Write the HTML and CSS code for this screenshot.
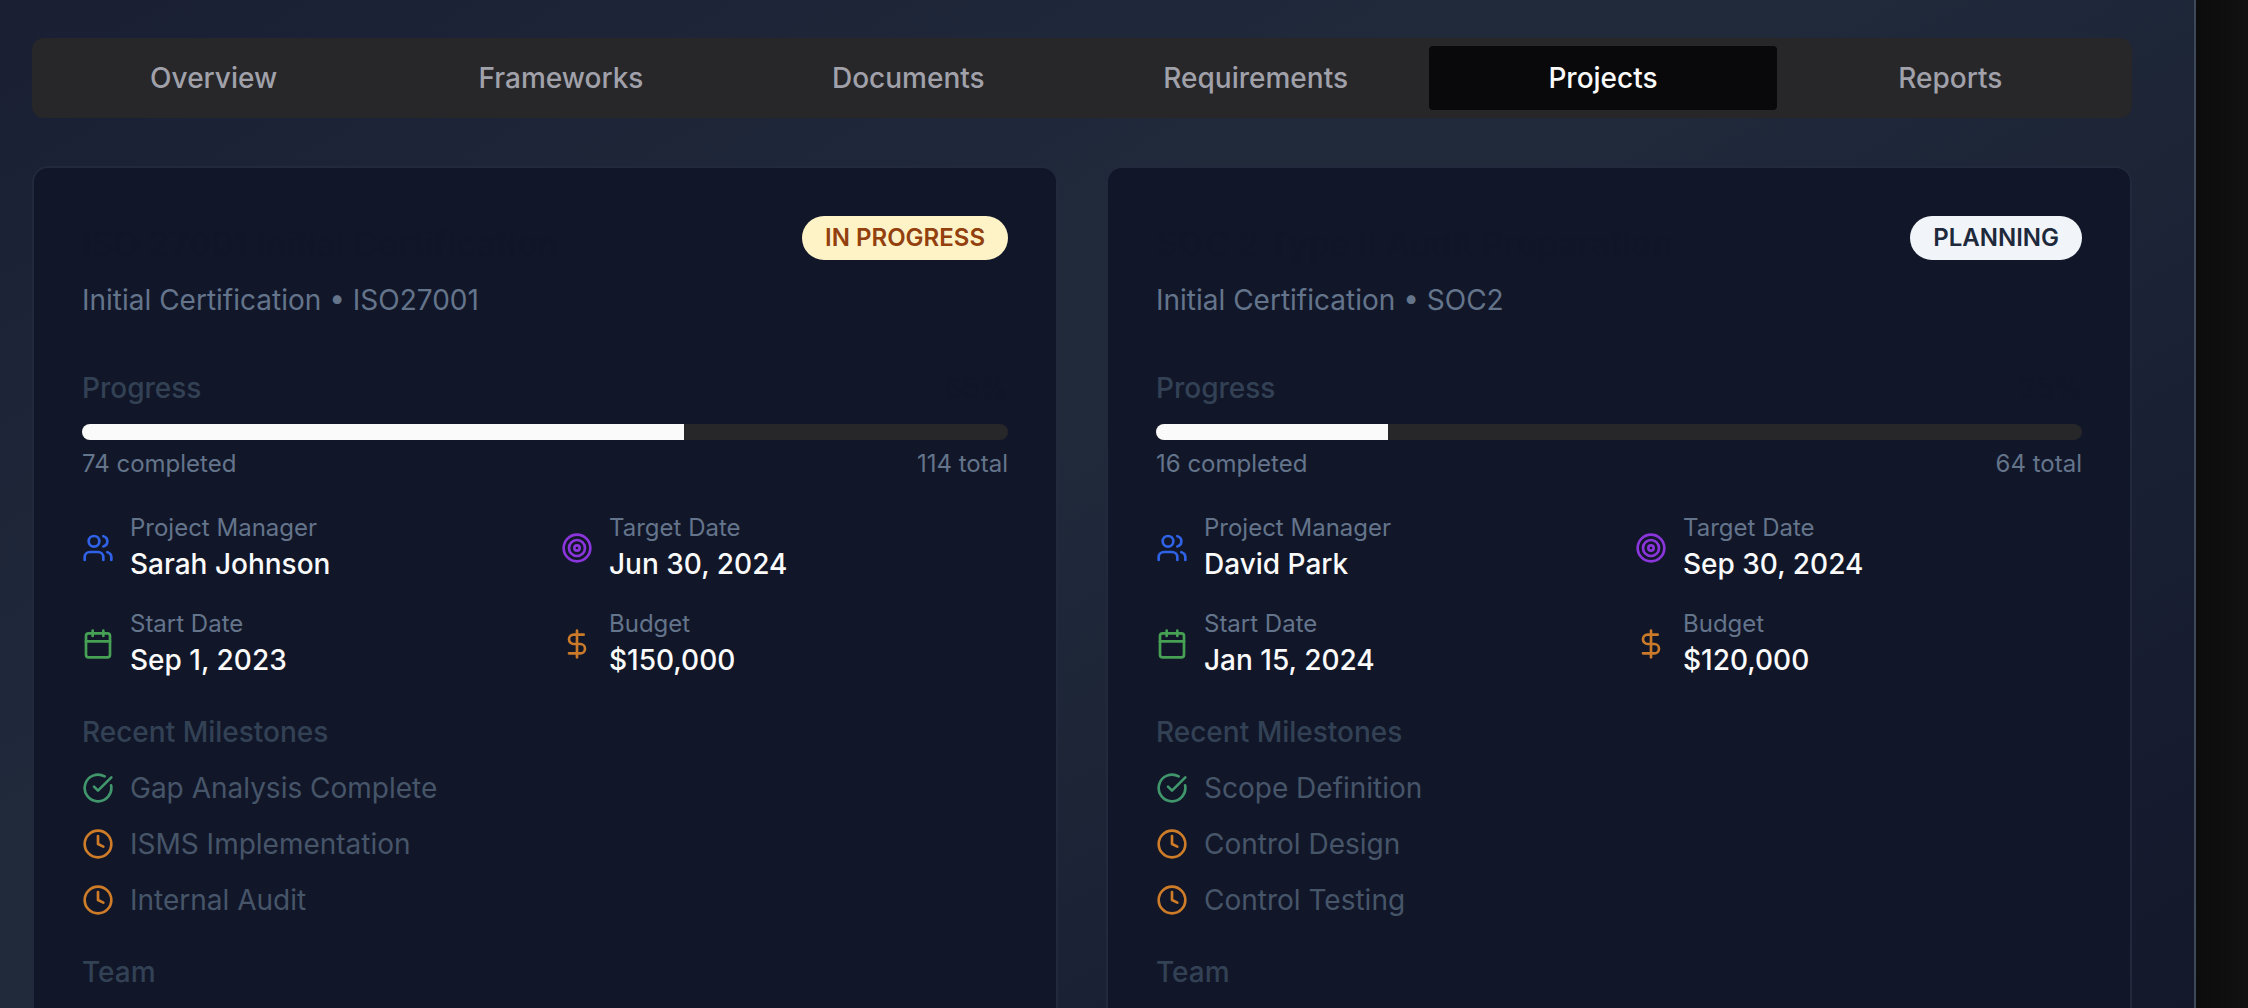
FILE: index.html
```html
<!DOCTYPE html>
<html lang="en">
<head>
<meta charset="utf-8">
<meta name="viewport" content="width=device-width, initial-scale=1">
<title>Projects</title>
<link rel="stylesheet" href="styles.css">
</head>
<body>
<svg class="sprite" aria-hidden="true">
  <symbol id="users" viewBox="0 0 24 24"><path d="M16 21v-2a4 4 0 0 0-4-4H6a4 4 0 0 0-4 4v2"/><circle cx="9" cy="7" r="4"/><path d="M22 21v-2a4 4 0 0 0-3-3.87"/><path d="M16 3.13a4 4 0 0 1 0 7.75"/></symbol>
  <symbol id="target" viewBox="0 0 24 24"><circle cx="12" cy="12" r="10"/><circle cx="12" cy="12" r="6"/><circle cx="12" cy="12" r="2"/></symbol>
  <symbol id="calendar" viewBox="0 0 24 24"><path d="M8 2v4"/><path d="M16 2v4"/><rect width="18" height="18" x="3" y="4" rx="2"/><path d="M3 10h18"/></symbol>
  <symbol id="dollar" viewBox="0 0 24 24"><path d="M12 2v20"/><path d="M17 5H9.500a3.500 3.500 0 0 0 0 7h5a3.500 3.500 0 0 1 0 7H6"/></symbol>
  <symbol id="check" viewBox="0 0 24 24"><path d="M21.801 10A10 10 0 1 1 17 3.335"/><path d="m9 11 3 3L22 4"/></symbol>
  <symbol id="clock" viewBox="0 0 24 24"><circle cx="12" cy="12" r="10"/><path d="M12 6v6l4 2"/></symbol>
</svg>
<div class="dialog">
  <nav class="tabs" role="tablist">
    <button class="tab" role="tab">Overview</button>
    <button class="tab" role="tab">Frameworks</button>
    <button class="tab" role="tab">Documents</button>
    <button class="tab" role="tab">Requirements</button>
    <button class="tab active" role="tab" aria-selected="true">Projects</button>
    <button class="tab" role="tab">Reports</button>
  </nav>
  <main class="projects">
    <article class="card">
      <header class="card-header">
        <div>
          <h2 class="title">ISO 27001 Initial Certification</h2>
          <p class="subtitle">Initial Certification • ISO27001</p>
        </div>
        <span class="badge in-progress">IN PROGRESS</span>
      </header>
      <section>
        <div class="row heading"><span>Progress</span><span class="percent">65%</span></div>
        <div class="bar"><div class="fill" style="width: 65%"></div></div>
        <div class="row counts"><span>74 completed</span><span>114 total</span></div>
      </section>
      <dl class="facts">
        <div class="fact"><svg class="icon blue"><use href="#users"/></svg><div><dt>Project Manager</dt><dd>Sarah Johnson</dd></div></div>
        <div class="fact"><svg class="icon purple"><use href="#target"/></svg><div><dt>Target Date</dt><dd>Jun 30, 2024</dd></div></div>
        <div class="fact"><svg class="icon green"><use href="#calendar"/></svg><div><dt>Start Date</dt><dd>Sep 1, 2023</dd></div></div>
        <div class="fact"><svg class="icon orange"><use href="#dollar"/></svg><div><dt>Budget</dt><dd>$150,000</dd></div></div>
      </dl>
      <section>
        <h3 class="heading">Recent Milestones</h3>
        <ul class="milestones">
          <li><svg class="icon emerald"><use href="#check"/></svg>Gap Analysis Complete</li>
          <li><svg class="icon amber"><use href="#clock"/></svg>ISMS Implementation</li>
          <li><svg class="icon amber"><use href="#clock"/></svg>Internal Audit</li>
        </ul>
      </section>
      <section>
        <h3 class="heading">Team</h3>
      </section>
    </article>
    <article class="card">
      <header class="card-header">
        <div>
          <h2 class="title">SOC 2 Type II Audit Preparation</h2>
          <p class="subtitle">Initial Certification • SOC2</p>
        </div>
        <span class="badge planning">PLANNING</span>
      </header>
      <section>
        <div class="row heading"><span>Progress</span><span class="percent">25%</span></div>
        <div class="bar"><div class="fill" style="width: 25%"></div></div>
        <div class="row counts"><span>16 completed</span><span>64 total</span></div>
      </section>
      <dl class="facts">
        <div class="fact"><svg class="icon blue"><use href="#users"/></svg><div><dt>Project Manager</dt><dd>David Park</dd></div></div>
        <div class="fact"><svg class="icon purple"><use href="#target"/></svg><div><dt>Target Date</dt><dd>Sep 30, 2024</dd></div></div>
        <div class="fact"><svg class="icon green"><use href="#calendar"/></svg><div><dt>Start Date</dt><dd>Jan 15, 2024</dd></div></div>
        <div class="fact"><svg class="icon orange"><use href="#dollar"/></svg><div><dt>Budget</dt><dd>$120,000</dd></div></div>
      </dl>
      <section>
        <h3 class="heading">Recent Milestones</h3>
        <ul class="milestones">
          <li><svg class="icon emerald"><use href="#check"/></svg>Scope Definition</li>
          <li><svg class="icon amber"><use href="#clock"/></svg>Control Design</li>
          <li><svg class="icon amber"><use href="#clock"/></svg>Control Testing</li>
        </ul>
      </section>
      <section>
        <h3 class="heading">Team</h3>
      </section>
    </article>
  </main>
</div>
</body>
</html>
```

FILE: styles.css
```css
* { box-sizing: border-box; margin: 0; padding: 0; }

body {
  min-height: 100vh;
  padding-right: 52px;
  background: linear-gradient(to left, #111111, #0c0c0c 52px);
  font-family: Inter, "Liberation Sans", sans-serif;
  font-size: 28px;
  line-height: 40px;
  overflow: hidden;
}

.sprite { display: none; }

.dialog {
  height: 100vh;
  overflow: hidden;
  padding: 38px 62px 0 32px;
  border-right: 2px solid #3f4859;
  background: linear-gradient(150deg, #1a1f33 0%, #202a3b 38%, #202a3b 46%, #1a2033 74%, #13182b 100%);
}

.tabs {
  display: grid;
  grid-template-columns: repeat(6, 1fr);
  padding: 8px;
  border-radius: 12px;
  background: #27272a;
}

.tab {
  height: 64px;
  border: 0;
  border-radius: 4px;
  background: transparent;
  color: #a1a1aa;
  font: inherit;
  font-weight: 500;
}

.tab.active { background: #09090b; color: #fafafa; }

.projects {
  display: grid;
  grid-template-columns: 1fr 1fr;
  gap: 48px;
  margin-top: 48px;
}

.card {
  display: flex;
  flex-direction: column;
  gap: 32px;
  padding: 48px;
  border: 2px solid #22293c;
  border-radius: 16px;
  background: #111729;
}

.card-header {
  display: flex;
  justify-content: space-between;
  align-items: flex-start;
  padding-bottom: 16px;
}

.title {
  margin-bottom: 8px;
  color: #101527;
  font-size: 34px;
  font-weight: 600;
  line-height: 56px;
}

.subtitle { color: #64748b; }

.badge {
  padding: 6px 23px;
  border-radius: 22px;
  font-size: 24px;
  font-weight: 600;
  line-height: 32px;
}

.in-progress { background: #fef3c7; color: #92400e; }
.planning { background: #f1f5f9; color: #1e293b; }

.row { display: flex; justify-content: space-between; }

.heading { color: #334155; font-size: 28px; font-weight: 500; }

.percent { color: #101527; font-weight: 600; }

.bar {
  height: 16px;
  margin: 16px 0 8px;
  overflow: hidden;
  border-radius: 8px;
  background: #27272a;
}

.fill { height: 100%; background: #fafafa; }

.counts { color: #64748b; font-size: 24px; line-height: 32px; }

.facts {
  display: grid;
  grid-template-columns: 1fr 1fr;
  gap: 24px 32px;
}

.fact { display: flex; align-items: center; gap: 16px; }
.fact dt { color: #64748b; font-size: 24px; line-height: 32px; }
.fact dd { color: #fafafa; font-weight: 500; }

.icon {
  flex: none;
  width: 32px;
  height: 32px;
  fill: none;
  stroke: currentColor;
  stroke-width: 2;
  stroke-linecap: round;
  stroke-linejoin: round;
}

.blue { color: #2f62e6; }
.purple { color: #8b35dc; }
.green { color: #46a154; }
.orange { color: #cb7a29; }
.emerald { color: #41966c; }
.amber { color: #cf7c28; }

.milestones {
  display: flex;
  flex-direction: column;
  gap: 16px;
  margin-top: 16px;
  list-style: none;
  color: #475569;
}

.milestones li { display: flex; align-items: center; gap: 16px; }
```
